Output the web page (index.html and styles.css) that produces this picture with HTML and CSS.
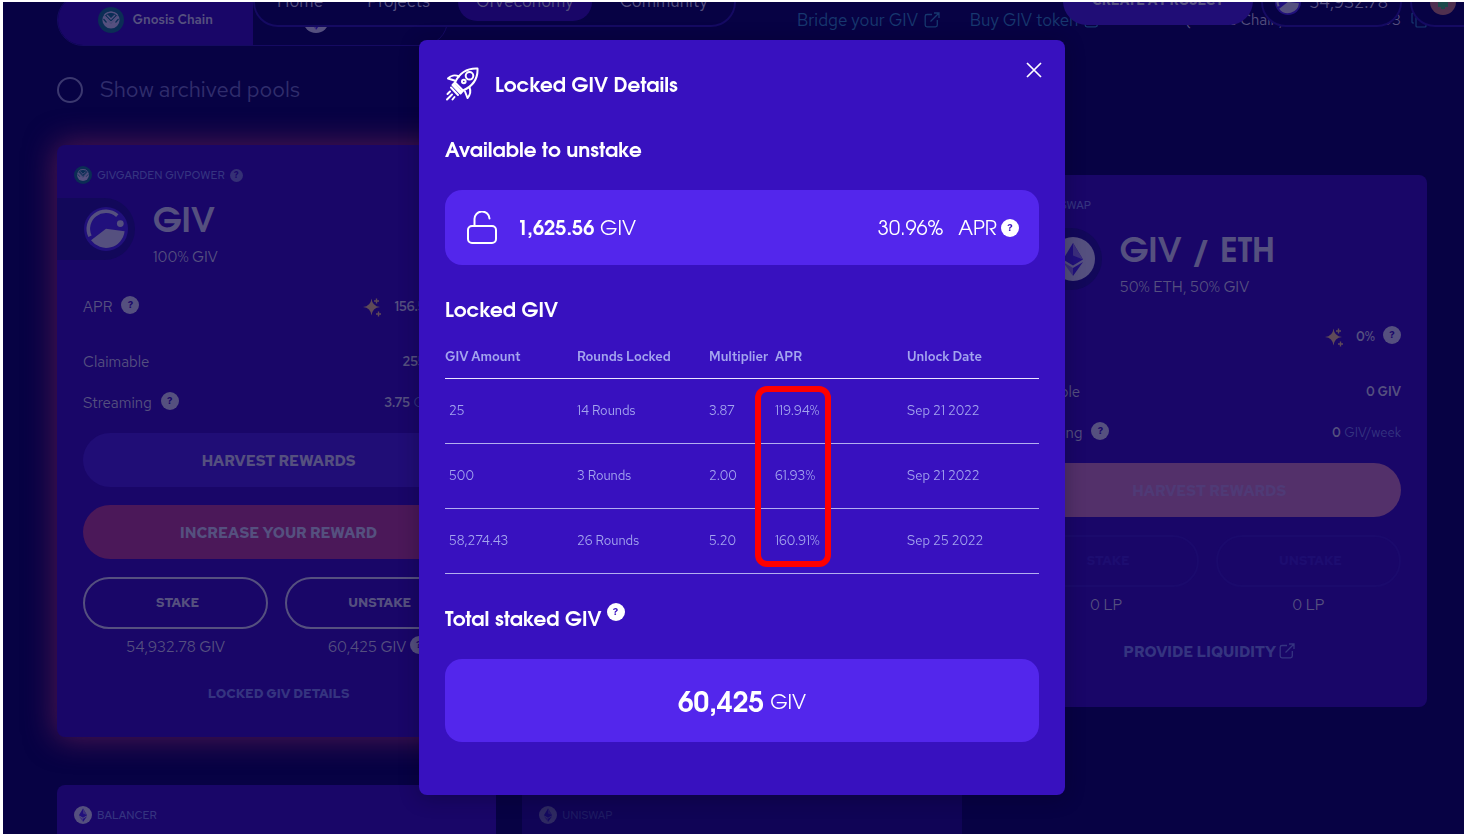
FILE: index.html
```html
<!DOCTYPE html>
<html lang="en">
<head>
<meta charset="utf-8">
<title>GIVeconomy – Locked GIV Details</title>
<meta name="viewport" content="width=device-width, initial-scale=1">
<link rel="stylesheet" href="styles.css">
</head>
<body>
<svg class="defs" aria-hidden="true">
  <symbol id="owl" viewBox="0 0 26 26">
    <circle cx="13" cy="13" r="13" fill="#0b2d55"/>
    <circle cx="13" cy="13" r="8.600" fill="#55507f"/>
    <path d="M5.500 8.500l7.500 8 7.500-8A8.600 8.600 0 0 0 13 5.200 8.600 8.600 0 0 0 5.500 8.500z" fill="#0b2d55"/>
    <path d="M6 8.500L13 15.500 20 8.500M6.500 8A8.600 8.600 0 0 1 19.500 8M9 8l4 4 4-4" fill="none" stroke="#55507f" stroke-width="1.300"/>
    <path d="M5.500 12l3 3.500M20.500 12l-3 3.500" stroke="#0b2d55" stroke-width="1.200"/>
  </symbol>
  <symbol id="eth" viewBox="0 0 44 44">
    <circle cx="22" cy="22" r="22" fill="#55507f"/>
    <path d="M22 6L12 22.500l10 6 10-6z" fill="#21107c"/>
    <path d="M22 6v12.500l10 4z" fill="#3c2f7e"/>
    <path d="M12 25l10 14V31z" fill="#3c2f7e"/>
    <path d="M32 25L22 39V31z" fill="#21107c"/>
  </symbol>
  <symbol id="giv" viewBox="0 0 44 44">
    <circle cx="22" cy="22" r="22" fill="#21107c"/>
    <path d="M33.300 8.600A17.500 17.500 0 0 0 6 29.300" fill="none" stroke="#55507f" stroke-width="3.600"/>
    <path d="M22 21.700L40.600 24.300A18.700 18.700 0 0 1 7 33.300z" fill="#55507f"/>
    <circle cx="36.300" cy="16.600" r="3.400" fill="#55507f"/>
  </symbol>
  <symbol id="spark" viewBox="0 0 20 20">
    <path d="M9.500 1.500Q10.300 9.200 18 10 10.300 10.800 9.500 18.500 8.700 10.800 1 10 8.700 9.200 9.500 1.500z" fill="#5f4a58"/>
    <path d="M14.500 1.500v5M12 4h5M16.500 14.500v5M14 17h5" stroke="#5f4a58" stroke-width="1.400" fill="none"/>
  </symbol>
  <symbol id="ext" viewBox="0 0 16 16">
    <path d="M8 2.500H3A1.800 1.800 0 0 0 1.200 4.300V13A1.800 1.800 0 0 0 3 14.800h8.500A1.800 1.800 0 0 0 13.300 13V8M10 1h5v5M15 1L6.500 9.500" fill="none" stroke="currentColor" stroke-width="1.300"/>
  </symbol>
</svg>

<div class="app">
  <header class="header">
    <nav class="nav">
      <a href="#">Home</a>
      <a href="#">Projects</a>
      <a href="#" class="nav-active">GIVeconomy</a>
      <a href="#">Community</a>
    </nav>
    <div class="header-right">
      <button class="create" type="button">CREATE A PROJECT</button>
      <button class="balance" type="button"><svg class="i26"><use href="#giv"/></svg>54,932.78</button>
      <button class="user" type="button" aria-label="Account"><svg viewBox="0 0 26 26" class="i26"><circle cx="13" cy="13" r="13" fill="#50304f"/><path d="M8 13h3v-4h4v4h3v5h-3v2h-4v-2H8z" fill="#1d4a4a"/></svg></button>
    </div>
  </header>

  <div class="toolbar">
    <div class="chains">
      <button type="button" class="chain chain-active"><svg class="i26"><use href="#owl"/></svg>Gnosis Chain</button>
      <button type="button" class="chain" aria-label="Ethereum"><svg class="i26"><use href="#eth"/></svg></button>
    </div>
    <div class="links">
      <a href="#">Bridge your GIV <svg class="i16"><use href="#ext"/></svg></a>
      <a href="#">Buy GIV token <svg class="i16"><use href="#ext"/></svg></a>
    </div>
    <div class="contract">
      <span>(Gnosis Chain, 0x4f4F…0D8693</span>
      <button class="copy" type="button" aria-label="Copy address"><svg class="i16" viewBox="0 0 16 16" fill="none" stroke="currentColor" stroke-width="1.200"><rect x="5" y="5" width="10" height="10" rx="1"/><path d="M3 11H2a1 1 0 0 1-1-1V2a1 1 0 0 1 1-1h8a1 1 0 0 1 1 1v1"/></svg></button>
    </div>
  </div>

  <label class="archived"><input type="checkbox">Show archived pools</label>

  <main class="pools">
    <section class="card card-glow">
      <div class="card-tag"><svg class="i18"><use href="#owl"/></svg>GIVGARDEN GIVPOWER<span class="help help-small">?</span></div>
      <div class="card-title">
        <div class="card-logo"><svg class="i44"><use href="#giv"/></svg></div>
        <div class="card-name"><h2>GIV</h2><p>100% GIV</p></div>
      </div>
      <div class="stats">
        <div class="stat stat-apr"><span>APR<span class="help help-gap">?</span></span><span class="value"><svg class="i20"><use href="#spark"/></svg><b>156.54%</b><span class="help">?</span></span></div>
        <div class="stat"><span>Claimable</span><b>255.83 GIV</b></div>
        <div class="stat"><span>Streaming<span class="help help-gap">?</span></span><span><b>3.75</b> <span class="unit">GIV/week</span></span></div>
      </div>
      <div class="actions">
        <button type="button" class="btn btn-harvest">HARVEST REWARDS</button>
        <button type="button" class="btn btn-increase">INCREASE YOUR REWARD</button>
        <div class="pair">
          <div><button type="button" class="btn btn-line">STAKE</button><p>54,932.78 GIV</p></div>
          <div><button type="button" class="btn btn-line">UNSTAKE</button><p>60,425 GIV <span class="help">?</span></p></div>
        </div>
      </div>
      <a href="#" class="card-link card-link-small">LOCKED GIV DETAILS</a>
    </section>

    <section class="card card-third">
      <div class="card-tag"><svg class="i18"><use href="#giv"/></svg><svg class="i18 stacked"><use href="#eth"/></svg>UNISWAP</div>
      <div class="card-title">
        <div class="card-logo card-logo-pair"><svg class="i44"><use href="#eth"/></svg></div>
        <div class="card-name"><h2>GIV / ETH</h2><p>50% ETH, 50% GIV</p></div>
      </div>
      <div class="stats">
        <div class="stat stat-apr"><span>APR</span><span class="value"><svg class="i20"><use href="#spark"/></svg><b>0%</b><span class="help">?</span></span></div>
        <div class="stat"><span>Claimable</span><b>0 GIV</b></div>
        <div class="stat"><span>Streaming<span class="help help-gap">?</span></span><span><b>0</b> <span class="unit">GIV/week</span></span></div>
      </div>
      <div class="actions">
        <button type="button" class="btn btn-off">HARVEST REWARDS</button>
        <div class="pair">
          <div><button type="button" class="btn btn-ghost">STAKE</button><p>0 LP</p></div>
          <div><button type="button" class="btn btn-ghost">UNSTAKE</button><p>0 LP</p></div>
        </div>
      </div>
      <a href="#" class="card-link">PROVIDE LIQUIDITY <svg class="i16"><use href="#ext"/></svg></a>
    </section>

    <section class="card card-next">
      <div class="card-tag"><svg class="i18"><use href="#eth"/></svg>BALANCER</div>
    </section>
    <section class="card card-next card-faded">
      <div class="card-tag"><svg class="i18"><use href="#eth"/></svg>UNISWAP</div>
    </section>
  </main>
</div>

<div class="overlay">
  <div class="modal" role="dialog" aria-labelledby="modal-title">
    <div class="modal-head">
      <svg class="rocket" viewBox="0 0 34 34" fill="none" stroke="#fff" stroke-width="2" stroke-linejoin="round" stroke-linecap="round">
        <path d="M10 15.500C14 7 21 1 32.500 1.500 33 12 27 19.500 18 23.500z"/>
        <path d="M14 9.500C10 7.500 5.500 8.500 3 11.500L9.500 13.500M24.500 20.500c1.500 3.500 .5 7.500-2 10.500L20 24.500"/>
        <path d="M10 15.500L7.500 18l8 8.500 2.500-3M9.500 17.500l7 7.500"/>
        <path d="M6 20.500l7 7.500"/>
        <circle cx="24.500" cy="8.800" r="3.800"/><circle cx="18.800" cy="14.500" r="1.800"/>
        <path d="M5 24.500L2.500 27M7 27.500l-5 5M9.500 30L7.500 32.500"/>
      </svg>
      <h1 id="modal-title">Locked GIV Details</h1>
      <button type="button" class="close" aria-label="Close"><svg class="i16" viewBox="0 0 16 16"><path d="M1 1l14 14M15 1L1 15" stroke="#fff" stroke-width="1.700"/></svg></button>
    </div>
    <h3>Available to unstake</h3>
    <div class="box box-available">
      <svg class="lock" viewBox="0 0 30 34" fill="none" stroke="#fff" stroke-width="2" stroke-linecap="round"><rect x="1" y="15" width="28" height="17" rx="4"/><path d="M7.500 15V8.500a7.500 7.500 0 0 1 15-1"/></svg>
      <span><b>1,625.56</b> GIV</span>
      <span class="box-apr">30.96%<span>APR<span class="help help-modal">?</span></span></span>
    </div>
    <h3>Locked GIV</h3>
    <div class="table-wrap">
      <table>
        <thead><tr><th class="wide">GIV Amount</th><th class="wide">Rounds Locked</th><th>Multiplier</th><th class="wide">APR</th><th class="wide">Unlock Date</th></tr></thead>
        <tbody>
          <tr><td>25</td><td>14 Rounds</td><td>3.87</td><td>119.94%</td><td>Sep 21 2022</td></tr>
          <tr><td>500</td><td>3 Rounds</td><td>2.00</td><td>61.93%</td><td>Sep 21 2022</td></tr>
          <tr><td>58,274.43</td><td>26 Rounds</td><td>5.20</td><td>160.91%</td><td>Sep 25 2022</td></tr>
        </tbody>
      </table>
      <span class="marker"></span>
    </div>
    <h3 class="total">Total staked GIV<span class="help help-modal">?</span></h3>
    <div class="box box-total"><b>60,425</b><span>GIV</span></div>
  </div>
</div>
</body>
</html>
```
FILE: styles.css
```css
:root {
  --bg: #070244;
  --card: #190668;
  --line: #150a62;
  --dim: #55507f;
  --muted: #353480;
  --modal: #3811bf;
  --box: #5326ec;
  --lilac: #a3a4ee;
  --body: "Red Hat Text", Roboto, sans-serif;
  --title: "TeX Gyre Adventor", Lato, sans-serif;
}
* { box-sizing: border-box; }
body { margin: 0; background: #fff; font: 400 16px/24px var(--body); color: var(--dim); overflow: hidden; }
h1, h2, h3, p { margin: 0; }
a { color: inherit; text-decoration: none; }
button { font: inherit; color: inherit; background: none; border: 0; padding: 0; cursor: pointer; }
b { font-weight: 600; }
svg { flex: none; }
.defs { position: absolute; width: 0; height: 0; }
.i16 { width: 16px; height: 16px; }
.i18 { width: 18px; height: 18px; }
.i20 { width: 20px; height: 20px; }
.i26 { width: 26px; height: 26px; }
.i44 { width: 44px; height: 44px; }

.app { position: relative; margin: 2px 0 0 3px; padding: 0 37px 0 54px; height: calc(100vh - 2px); overflow: hidden; background: var(--bg); }

.header { position: absolute; top: -25px; left: 250px; right: -40px; display: flex; justify-content: space-between; font-size: 17px; }
.nav { display: flex; align-items: center; height: 50px; padding: 0 4px; border: 2px solid var(--line); border-radius: 25px; background: var(--bg); }
.nav a { padding: 6px 18px 8px; border-radius: 19px; }
.nav a:nth-child(2) { padding: 6px 28px 8px 26px; }
.nav a:last-child { padding: 6px 22px 8px 28px; }
.nav .nav-active { background: var(--card); }
.header-right { display: flex; gap: 8px; }
.create { width: 190px; height: 48px; border-radius: 24px; background: #200d76; font-size: 13px; font-weight: 700; }
.balance, .user { display: flex; align-items: center; gap: 8px; height: 50px; padding: 0 12px; border: 2px solid var(--line); border-radius: 25px; background: var(--bg); }
.user { width: 94px; padding: 0 18px; }

.toolbar { display: flex; align-items: center; margin-top: -8px; height: 52px; }
.chains { display: grid; grid-template-columns: 1fr 1fr; width: 391px; height: 52px; border: 1px solid var(--line); border-radius: 26px; overflow: hidden; }
.chain { display: flex; align-items: center; justify-content: center; gap: 9px; font-size: 13px; font-weight: 600; }
.chain:last-child { justify-content: flex-start; padding-left: 50px; }
.chain-active { background: var(--card); }
.links { display: flex; gap: 30px; margin-left: 349px; color: #17386f; font-size: 17px; white-space: nowrap; }
.links svg { vertical-align: -2px; margin-left: 2px; }
.contract { display: flex; align-items: center; gap: 10px; margin-left: auto; font-size: 15px; white-space: nowrap; }
.copy { display: flex; color: #17386f; }

.archived { display: flex; align-items: center; gap: 17px; width: max-content; margin-top: 28px; font-size: 22px; line-height: 32px; color: #302d6c; }
.archived input { appearance: none; width: 26px; height: 26px; margin: 0; border: 2px solid #3b386f; border-radius: 50%; }

.pools { display: grid; grid-template-columns: repeat(3, 1fr); gap: 48px 26px; align-items: center; margin-top: 39px; }
.card { border-radius: 8px; background: var(--card); padding-top: 18px; }
.card-glow { box-shadow: 0 0 30px 2px #501650; padding-bottom: 31px; }
.card-third { grid-column: 3; padding-bottom: 43px; }
.card-next { min-height: 240px; }
.card-faded { opacity: .5; }
.card-tag { display: flex; align-items: center; gap: 5px; padding: 0 17px; font-size: 11px; font-weight: 500; color: var(--muted); }
.stacked { margin-left: -10px; }
.card-title { display: flex; gap: 18px; margin-top: 11px; }
.card-logo { display: flex; align-items: center; justify-content: flex-end; width: 78px; height: 62px; padding-right: 7px; border-radius: 0 31px 31px 0; background: #12085a; }
.card-logo-pair { width: 114px; }
.card-name { padding-top: 4px; }
h2 { font: 700 34px/42px var(--title); }
.card-title p { font-size: 15px; line-height: 26px; }
.stats { padding: 2px 26px 0; }
.stat { display: flex; align-items: center; justify-content: space-between; height: 41px; font-size: 15px; white-space: nowrap; }
.stat-apr { height: 69px; }
.stat b { font-size: 13px; }
.stat .unit { font-size: 13px; color: var(--muted); }
.value { display: flex; align-items: center; }
.value b { margin: 0 8px 0 12px; }
.value .help { margin-bottom: 4px; }
.help { display: inline-flex; align-items: center; justify-content: center; width: 18px; height: 18px; border-radius: 50%; background: var(--dim); color: var(--card); font: 700 10px/18px var(--body); vertical-align: 4px; }
.help-gap { margin-left: 9px; }
.help-small { width: 13px; height: 13px; background: #353075; font-size: 9px; line-height: 13px; }
.actions { display: grid; gap: 18px; padding: 10px 26px 0; }
.btn { width: 100%; height: 54px; padding: 2px 0 0 4px; border-radius: 27px; font-size: 15px; font-weight: 700; }
.btn-harvest { background: #200d76; }
.btn-increase { background: #4b1859; }
.btn-off { background: #53306a; color: #4f3a76; }
.pair { display: grid; grid-template-columns: 1fr 1fr; gap: 17px; text-align: center; }
.pair p { height: 36px; font-size: 15px; line-height: 36px; }
.btn-line, .btn-ghost { display: block; height: 52px; padding-top: 0; border: 2px solid var(--dim); font-size: 13px; }
.btn-ghost { border-color: #1b0a6c; color: #1d0d70; }
.card-link { display: block; margin-top: 17px; padding-left: 4px; text-align: center; font-size: 15px; font-weight: 700; color: var(--muted); }
.card-link svg { vertical-align: -2px; }
.card-link-small { font-size: 13px; }

.overlay { position: fixed; inset: 0; display: flex; justify-content: center; align-items: center; padding: 1px 0 0 20px; }
.modal { width: 646px; padding: 26px 26px 53px; border-radius: 8px; background: var(--modal); color: #fff; box-shadow: 0 3px 20px rgba(0, 0, 20, .3); }
.modal-head { display: flex; align-items: center; gap: 16px; height: 39px; }
.rocket { width: 34px; height: 34px; margin-bottom: 4px; }
h1, h3 { padding-top: 4px; font: 700 20px/28px var(--title); }
.modal-head h1 { padding-top: 2px; }
.close { display: flex; align-self: flex-start; margin: -4px -3px 0 auto; }
.modal h3 { margin-top: 29px; }
.box { display: flex; align-items: center; border-radius: 17px; background: var(--box); font: 400 20px/28px var(--title); }
.modal .box { margin-top: 24px; }
.modal .box b { font-weight: 700; }
.box-available { height: 75px; padding: 0 20px 0 22px; }
.box-available span { padding-top: 5px; }
.lock { width: 30px; height: 34px; margin-right: 20px; }
.box-apr { display: flex; gap: 15px; margin-left: auto; }
.box-apr span { padding: 0; }
.table-wrap { position: relative; margin-top: 10px; }
table { width: 100%; table-layout: fixed; border-collapse: collapse; font-size: 13px; color: var(--lilac); }
.wide { width: calc(200% / 9); }
th, td { padding: 0; text-align: left; border-bottom: 1px solid #b3aef0; }
th { height: 42px; border-color: #ebe6ff; font-weight: 600; white-space: nowrap; }
td { height: 65px; padding-top: 1px; }
td:first-child { padding-left: 4px; }
.marker { position: absolute; left: 52%; top: 50px; width: 76px; height: 181px; margin-left: 1px; border: 6px solid #f00; border-radius: 12px; }
.help-modal { background: #fff; color: var(--modal); margin-left: 5px; }
.modal .total { display: flex; align-items: flex-start; height: 32px; padding-top: 0; line-height: 36px; }
.box-apr .help-modal { margin-left: 4px; }
.box-total { justify-content: center; gap: 6px; height: 83px; padding-top: 8px; }
.box-total b { font-size: 28px; }
```
